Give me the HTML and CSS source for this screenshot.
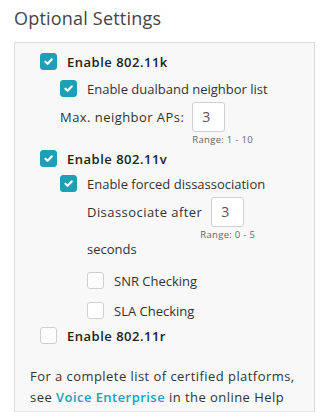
FILE: index.html
```html
<!DOCTYPE html>
<html lang="en">
<head>
    <meta charset="UTF-8">
    <meta name="viewport" content="width=device-width, initial-scale=1.0">
    <title>Optional Settings</title>
    <link rel="stylesheet" href="styles.css">
</head>
<body>
    <h2 class="title">Optional Settings</h2>

    <div class="panel">
        <div class="check-row level-1 first">
            <span class="box checked"><svg viewBox="0 0 10 10"><path d="M2.2 5.2 L4.2 7.1 L7.9 3.1" /></svg></span>
            <span class="label strong">Enable 802.11k</span>
        </div>
        <div class="check-row level-2">
            <span class="box checked"><svg viewBox="0 0 10 10"><path d="M2.2 5.2 L4.2 7.1 L7.9 3.1" /></svg></span>
            <span class="label">Enable dualband neighbor list</span>
        </div>
        <div class="field level-2 neighbor">
            <span class="label">Max. neighbor APs:</span>
            <div class="input-wrap">
                <div class="num-input">3</div>
                <div class="range">Range: 1 - 10</div>
            </div>
        </div>

        <div class="check-row level-1 v">
            <span class="box checked"><svg viewBox="0 0 10 10"><path d="M2.2 5.2 L4.2 7.1 L7.9 3.1" /></svg></span>
            <span class="label strong">Enable 802.11v</span>
        </div>
        <div class="check-row level-2 forced">
            <span class="box checked"><svg viewBox="0 0 10 10"><path d="M2.2 5.2 L4.2 7.1 L7.9 3.1" /></svg></span>
            <span class="label">Enable forced dissassociation</span>
        </div>
        <div class="field level-3 disassoc">
            <span class="label">Disassociate after</span>
            <div class="input-wrap">
                <div class="num-input">3</div>
                <div class="range">Range: 0 - 5</div>
            </div>
        </div>
        <div class="seconds level-3">seconds</div>

        <div class="check-row level-3 snr">
            <span class="box"></span>
            <span class="label">SNR Checking</span>
        </div>
        <div class="check-row level-3 sla">
            <span class="box"></span>
            <span class="label">SLA Checking</span>
        </div>

        <div class="check-row level-1 r">
            <span class="box"></span>
            <span class="label strong">Enable 802.11r</span>
        </div>

        <div class="note">
            <div class="note-line">For a complete list of certified platforms,</div>
            <div class="note-line">see <a href="#">Voice Enterprise</a> in the online Help</div>
        </div>
    </div>
</body>
</html>
```

FILE: styles.css
```css
body {
    margin: 0;
    background-color: #ffffff;
    font-family: "Open Sans", "Liberation Sans", sans-serif;
    color: #333333;
}

.title {
    margin: 0;
    padding: 6px 0 0 14px;
    height: 36px;
    box-sizing: border-box;
    font-size: 18px;
    font-weight: 500;
    color: #444444;
    letter-spacing: 0.2px;
}

.panel {
    margin-left: 14px;
    width: 301px;
    height: 370px;
    box-sizing: border-box;
    margin-top: 6px;
    border: 1px solid #dcdcdc;
    border-bottom-color: #e6e6e6;
    background-color: #f8f8f8;
    padding-top: 10px;
}

.level-1 { padding-left: 25px; }
.level-2 { padding-left: 45px; }
.level-3 { padding-left: 72px; }

.check-row {
    display: flex;
    align-items: center;
    height: 17px;
    margin-top: 10px;
}

.check-row.first { margin-top: 0; }
.check-row.v { margin-top: 4px; }
.check-row.forced { margin-top: 8px; }
.check-row.snr { margin-top: 14px; }
.check-row.sla { margin-top: 13px; }
.check-row.r { margin-top: 8px; }

.box {
    width: 17px;
    height: 17px;
    box-sizing: border-box;
    border-radius: 3px;
    border: 1px solid #cfcfcf;
    background-color: #ffffff;
    margin-right: 10px;
    flex-shrink: 0;
    display: flex;
    align-items: center;
    justify-content: center;
}

.box.checked {
    background-color: #1e9fb6;
    border-color: #1e9fb6;
}

.box svg {
    width: 11px;
    height: 11px;
}

.box path {
    fill: none;
    stroke: #ffffff;
    stroke-width: 2;
    stroke-linecap: round;
    stroke-linejoin: round;
}

.label {
    font-size: 13px;
    font-weight: 500;
    color: #333333;
    white-space: nowrap;
}

.label.strong {
    font-weight: 600;
    color: #222222;
    letter-spacing: 0.5px;
}

.field {
    display: flex;
    align-items: flex-start;
    margin-top: 5px;
}

.field .label {
    line-height: 30px;
    margin-right: 8px;
    letter-spacing: 0.45px;
}

.num-input {
    width: 33px;
    height: 30px;
    box-sizing: border-box;
    border: 1px solid #cfcfcf;
    border-radius: 3px;
    background-color: #ffffff;
    font-size: 14px;
    line-height: 28px;
    padding-left: 9px;
    color: #555555;
}

.range {
    font-size: 9.5px;
    color: #666666;
    line-height: 13px;
    letter-spacing: 0.3px;
    white-space: nowrap;
    margin-top: 1px;
}

.disassoc .label { margin-right: 9px; }
.disassoc .range { margin-left: -11px; }

.seconds {
    font-size: 13px;
    font-weight: 500;
    line-height: 17px;
    margin-top: 0;
}

.note {
    margin: 22px 0 0 15px;
    font-size: 13px;
    line-height: 21px;
    letter-spacing: 0.45px;
    color: #333333;
}

.note-line {
    white-space: nowrap;
}

.note a {
    color: #1e9fb6;
    font-weight: 600;
    text-decoration: none;
}
```
